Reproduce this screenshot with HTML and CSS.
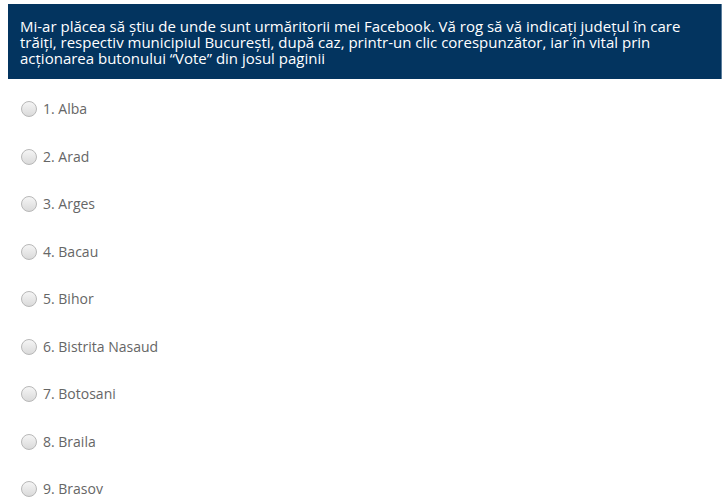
FILE: index.html
```html
<!DOCTYPE html>
<html lang="ro">
<head>
<meta charset="utf-8">
<link rel="stylesheet" href="styles.css">
</head>
<body>
<div class="poll">
  <div class="question">Mi-ar plăcea să știu de unde sunt urmăritorii mei Facebook. Vă rog să vă indicați județul în care trăiți, respectiv municipiul București, după caz, printr-un clic corespunzător, iar în vital prin acționarea butonului “Vote” din josul paginii</div>
  <ul class="options">
    <li class="option"><span class="radio"></span><span class="label">1. Alba</span></li>
    <li class="option"><span class="radio"></span><span class="label">2. Arad</span></li>
    <li class="option"><span class="radio"></span><span class="label">3. Arges</span></li>
    <li class="option"><span class="radio"></span><span class="label">4. Bacau</span></li>
    <li class="option"><span class="radio"></span><span class="label">5. Bihor</span></li>
    <li class="option"><span class="radio"></span><span class="label">6. Bistrita Nasaud</span></li>
    <li class="option"><span class="radio"></span><span class="label">7. Botosani</span></li>
    <li class="option"><span class="radio"></span><span class="label">8. Braila</span></li>
    <li class="option"><span class="radio"></span><span class="label">9. Brasov</span></li>
  </ul>
</div>
</body>
</html>
```
FILE: styles.css
```css
html, body {
  margin: 0;
  padding: 0;
  background: #fff;
}
body {
  font-family: "Open Sans", "Noto Sans", sans-serif;
}
.poll {
  padding: 4px 6px 0 8px;
}
.question {
  background: #03345f;
  color: #fff;
  font-size: 15px;
  line-height: 16px;
  padding: 14px 12px 13px 12px;
  border-right: 1px solid #5a7d9c;
}
.options {
  list-style: none;
  margin: 0;
  padding: 22px 0 0 13px;
}
.option {
  display: flex;
  align-items: center;
  gap: 6px;
  height: 47.5px;
  align-items: flex-start;
}
.radio {
  width: 16px;
  height: 16px;
  border-radius: 50%;
  box-sizing: border-box;
  border: 1px solid #b8b8b8;
  background: linear-gradient(#f5f5f5, #dadada);
}
.label {
  font-size: 14px;
  line-height: 16px;
  color: #666;
}
```
